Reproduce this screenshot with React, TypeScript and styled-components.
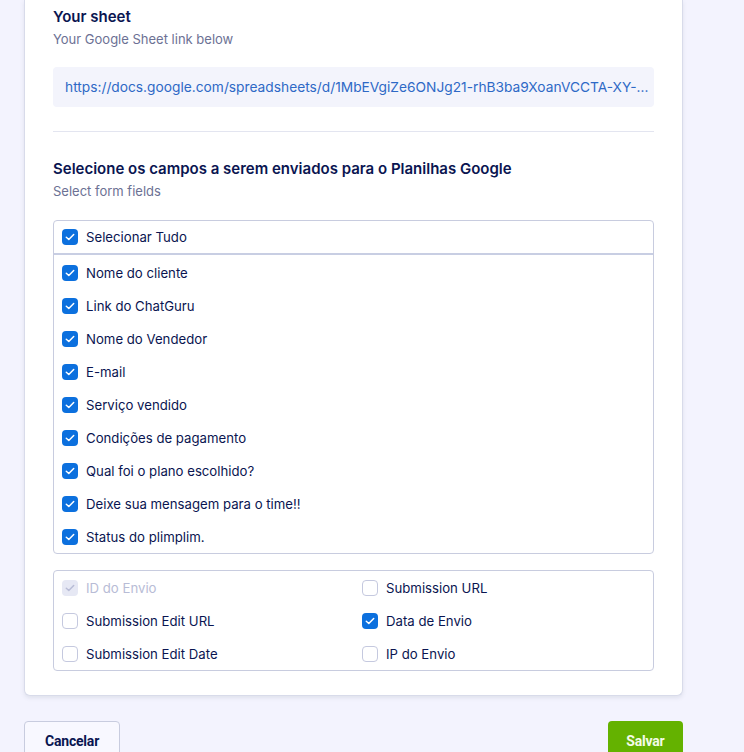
import React, { useState } from 'react';
import styled, { createGlobalStyle } from 'styled-components';

const GlobalStyle = createGlobalStyle`
  html, body {
    margin: 0;
    padding: 0;
    background: #f3f3fe;
    font-family: Inter, "Noto Sans", sans-serif;
    color: #0a1551;
  }
  * { box-sizing: border-box; }
`;

const Page = styled.div`
  width: 744px;
  height: 752px;
  overflow: hidden;
  padding: 0 61px 0 24px;
`;

const Card = styled.div`
  background: #ffffff;
  border: 1px solid #d8dbea;
  border-top: none;
  border-radius: 0 0 6px 6px;
  box-shadow: 0 2px 4px rgba(84, 95, 111, 0.12);
  padding: 7px 28px 24px 28px;
`;

const Title = styled.div`
  font-size: 15px;
  font-weight: 600;
  line-height: 20px;
  color: #0a1551;
`;

const Subtitle = styled.div`
  font-size: 13px;
  line-height: 18px;
  margin-top: 3px;
  color: #6c7194;
`;

const LinkBox = styled.div`
  margin-top: 19px;
  height: 40px;
  background: #f3f4fc;
  border-radius: 4px;
  padding: 0 0 0 12px;
  display: flex;
  align-items: center;
  font-size: 13.75px;
  color: #2e69c6;
  white-space: nowrap;
`;

const Divider = styled.hr`
  border: none;
  border-top: 1px solid #e3e5f0;
  margin: 24px 0 27px;
`;

const FieldBox = styled.div`
  margin-top: 20px;
  border: 1px solid #c8ccdf;
  border-radius: 4px;
`;

const AllRow = styled.div`
  height: 34px;
  padding: 0 8px;
  display: flex;
  align-items: center;
  border-bottom: 2px solid #c8cee3;
`;

const List = styled.div`
  padding: 1px 8px 0;
`;

const ExtraGrid = styled.div`
  margin-top: 16px;
  border: 1px solid #c8ccdf;
  border-radius: 4px;
  padding: 0 8px;
  display: grid;
  grid-template-columns: 300px 1fr;
`;

const Row = styled.label<{ $disabled?: boolean }>`
  height: 33px;
  display: flex;
  align-items: center;
  gap: 8px;
  font-size: 13.2px;
  color: ${(p) => (p.$disabled ? '#b8bcd6' : '#0a1551')};
  cursor: ${(p) => (p.$disabled ? 'default' : 'pointer')};
`;

const Box = styled.span<{ $checked: boolean; $disabled?: boolean }>`
  width: 16px;
  height: 16px;
  flex: none;
  border-radius: 4px;
  display: inline-flex;
  align-items: center;
  justify-content: center;
  background: ${(p) => (p.$disabled ? '#e6e8f4' : p.$checked ? '#0c70de' : '#ffffff')};
  border: ${(p) => (p.$checked ? 'none' : '1.5px solid #c5c9df')};
`;

const Footer = styled.div`
  margin-top: 25px;
  display: flex;
  justify-content: space-between;
`;

const Button = styled.button<{ $primary?: boolean }>`
  height: 40px;
  padding: 0 ${(p) => (p.$primary ? '18.5px' : '20px')};
  border-radius: 4px;
  font-family: Roboto, "Liberation Sans", sans-serif;
  font-weight: 700;
  font-size: 14px;
  letter-spacing: -0.2px;
  border: ${(p) => (p.$primary ? 'none' : '1px solid #c8ccdf')};
  background: ${(p) => (p.$primary ? '#64b200' : '#f8f8ff')};
  color: ${(p) => (p.$primary ? '#f4fbe8' : '#0a1551')};
  cursor: pointer;
`;

function Check({ checked, disabled }: { checked: boolean; disabled?: boolean }) {
  return (
    <Box $checked={checked} $disabled={disabled}>
      {checked && (
        <svg width="10" height="8" viewBox="0 0 10 8">
          <path
            d="M1.3 4.2 L3.8 6.5 L8.7 1.5"
            fill="none"
            stroke={disabled ? '#b8bcd6' : '#ffffff'}
            strokeWidth="1.5"
            strokeLinecap="round"
            strokeLinejoin="round"
          />
        </svg>
      )}
    </Box>
  );
}

const formFields = [
  'Nome do cliente',
  'Link do ChatGuru',
  'Nome do Vendedor',
  'E-mail',
  'Serviço vendido',
  'Condições de pagamento',
  'Qual foi o plano escolhido?',
  'Deixe sua mensagem para o time!!',
  'Status do plimplim.',
];

const extraFields = [
  { name: 'ID do Envio', checked: true, disabled: true },
  { name: 'Submission URL', checked: false },
  { name: 'Submission Edit URL', checked: false },
  { name: 'Data de Envio', checked: true },
  { name: 'Submission Edit Date', checked: false },
  { name: 'IP do Envio', checked: false },
];

export default function App() {
  const [selected, setSelected] = useState<boolean[]>(formFields.map(() => true));
  const [extras, setExtras] = useState(extraFields);
  const allChecked = selected.every(Boolean);

  return (
    <>
      <GlobalStyle />
      <Page>
        <Card>
          <Title>Your sheet</Title>
          <Subtitle>Your Google Sheet link below</Subtitle>
          <LinkBox>https://docs.google.com/spreadsheets/d/1MbEVgiZe6ONJg21-rhB3ba9XoanVCCTA-XY-...</LinkBox>

          <Divider />

          <Title>Selecione os campos a serem enviados para o Planilhas Google</Title>
          <Subtitle>Select form fields</Subtitle>

          <FieldBox>
            <AllRow>
              <Row onClick={() => setSelected(formFields.map(() => !allChecked))}>
                <Check checked={allChecked} />
                Selecionar Tudo
              </Row>
            </AllRow>
            <List>
              {formFields.map((name, i) => (
                <Row
                  key={name}
                  onClick={() => setSelected((s) => s.map((v, j) => (j === i ? !v : v)))}
                >
                  <Check checked={selected[i]} />
                  {name}
                </Row>
              ))}
            </List>
          </FieldBox>

          <ExtraGrid>
            {extras.map((f, i) => (
              <Row
                key={f.name}
                $disabled={f.disabled}
                onClick={() =>
                  !f.disabled &&
                  setExtras((s) => s.map((x, j) => (j === i ? { ...x, checked: !x.checked } : x)))
                }
              >
                <Check checked={f.checked} disabled={f.disabled} />
                {f.name}
              </Row>
            ))}
          </ExtraGrid>
        </Card>

        <Footer>
          <Button>Cancelar</Button>
          <Button $primary>Salvar</Button>
        </Footer>
      </Page>
    </>
  );
}
